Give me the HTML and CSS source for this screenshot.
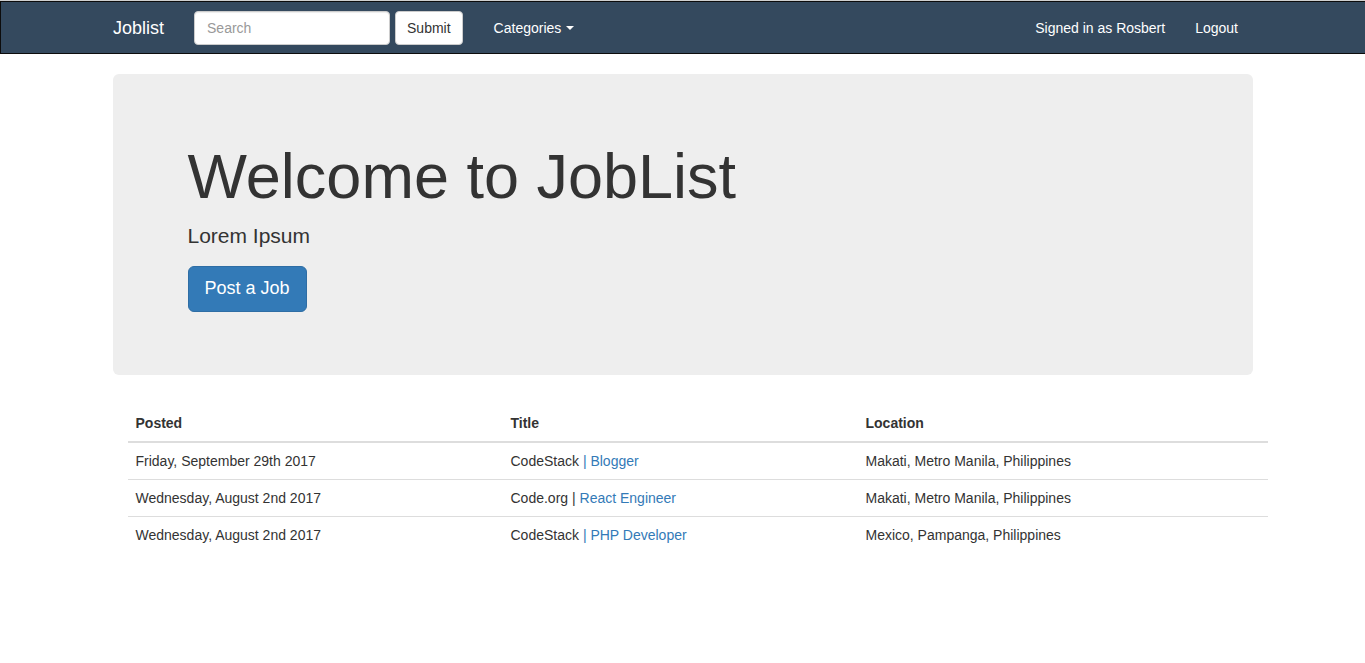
FILE: index.html
```html
<!DOCTYPE html>
<html>
<head>
<meta charset="utf-8">
<title>Joblist</title>
<link rel="stylesheet" href="styles.css">
</head>
<body>
<div class="page">
  <nav class="navbar">
    <div class="container nav-inner">
      <a class="brand" href="#">Joblist</a>
      <form class="nav-form">
        <input class="form-control" type="text" placeholder="Search">
        <button class="btn-default" type="button">Submit</button>
      </form>
      <a class="nav-link" href="#">Categories <span class="caret"></span></a>
      <div class="nav-right">
        <a class="nav-link" href="#">Signed in as Rosbert</a>
        <a class="nav-link" href="#">Logout</a>
      </div>
    </div>
  </nav>

  <div class="container">
    <div class="jumbotron">
      <div class="jumbo-inner">
        <h1>Welcome to JobList</h1>
        <p>Lorem Ipsum</p>
        <div class="btn-row"><a class="btn-primary" href="#">Post a Job</a></div>
      </div>
    </div>

    <table class="table">
      <thead>
        <tr><th class="c1">Posted</th><th class="c2">Title</th><th>Location</th></tr>
      </thead>
      <tbody>
        <tr><td>Friday, September 29th 2017</td><td>CodeStack <span class="link">| Blogger</span></td><td>Makati, Metro Manila, Philippines</td></tr>
        <tr><td>Wednesday, August 2nd 2017</td><td>Code.org | <span class="link">React Engineer</span></td><td>Makati, Metro Manila, Philippines</td></tr>
        <tr><td>Wednesday, August 2nd 2017</td><td>CodeStack <span class="link">| PHP Developer</span></td><td>Mexico, Pampanga, Philippines</td></tr>
      </tbody>
    </table>
  </div>
</div>
</body>
</html>
```
FILE: styles.css
```css
* { box-sizing: border-box; }
html, body { margin: 0; padding: 0; }
body {
  font-family: "Liberation Sans", Arial, sans-serif;
  font-size: 14px;
  line-height: 1.42857;
  color: #333;
  background: #fff;
}
.page { border-top: 1px solid #cfcfcf; }
a { text-decoration: none; }

.navbar {
  background: #34495e;
  border: 1px solid #0c0c0c;
  border-right: 0;
  height: 53px;
  padding-top: 1px;
  margin-bottom: 20px;
}
.container {
  width: 1170px;
  margin: 0 auto;
  padding: 0 15px;
}
.nav-inner {
  display: flex;
  align-items: center;
  height: 50px;
}
.brand {
  color: #fff;
  font-size: 18px;
  line-height: 20px;
  padding: 15px 15px 15px 0;
}
.nav-form {
  display: flex;
  gap: 5px;
  padding: 0 16px 0 15px;
}
.form-control {
  width: 196px;
  height: 34px;
  padding: 6px 12px;
  font-family: inherit;
  font-size: 14px;
  color: #555;
  background: #fff;
  border: 1px solid #ccc;
  border-radius: 4px;
  box-shadow: inset 0 1px 1px rgba(0,0,0,.075);
}
.form-control::placeholder { color: #999; }
.btn-default {
  height: 34px;
  padding: 6px 11px;
  font-family: inherit;
  font-size: 14px;
  color: #333;
  background: #fff;
  border: 1px solid #ccc;
  border-radius: 4px;
}
.nav-link {
  color: #fff;
  line-height: 20px;
  padding: 15px;
  display: flex;
  align-items: center;
}
.caret {
  display: inline-block;
  width: 0;
  height: 0;
  margin-left: 5px;
  border-top: 4px solid #fff;
  border-left: 4px solid transparent;
  border-right: 4px solid transparent;
}
.nav-right {
  margin-left: auto;
  display: flex;
}

.jumbotron {
  background: #eee;
  border-radius: 6px;
  padding: 48px 60px;
  margin-bottom: 30px;
}
.jumbo-inner { padding: 0 15px; }
.jumbotron h1 {
  font-size: 63px;
  font-weight: 500;
  line-height: 1.1;
  margin: 20px 0 10px;
  color: #333;
}
.jumbotron p {
  font-size: 21px;
  font-weight: 200;
  margin: 0 0 15px;
}
.btn-row {
  display: flex;
  margin-bottom: 15px;
}
.btn-primary {
  display: inline-block;
  color: #fff;
  background: #337ab7;
  border: 1px solid #2e6da4;
  border-radius: 6px;
  padding: 10px 16px;
  font-size: 18px;
  line-height: 1.3333;
}

.table {
  width: 100%;
  margin-left: 15px;
  border-collapse: collapse;
  border-spacing: 0;
}
.table th, .table td {
  text-align: left;
  padding: 8px;
  line-height: 20px;
  vertical-align: top;
}
.table th {
  font-weight: bold;
  border-bottom: 2px solid #ddd;
  vertical-align: bottom;
}
.table td { border-top: 1px solid #ddd; }
.table tbody tr:first-child td { border-top: 0; }
.c1 { width: 375px; }
.c2 { width: 355px; }
.link { color: #337ab7; }
```
